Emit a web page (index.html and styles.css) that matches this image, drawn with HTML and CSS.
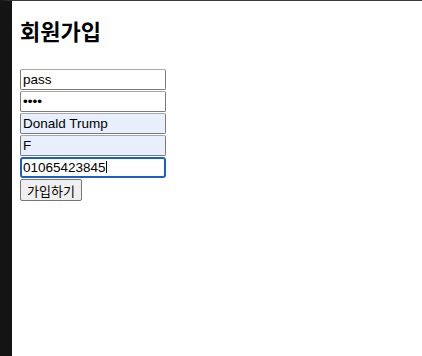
FILE: index.html
```html
<!DOCTYPE html>
<html lang="ko">
<head>
    <meta charset="UTF-8">
    <meta name="viewport" content="width=device-width, initial-scale=1.0">
    <title>회원가입</title>
    <link rel="stylesheet" href="styles.css">
</head>
<body>
    <div class="page">
        <h1 class="title">회원가입</h1>
        <form class="join-form">
            <input class="field" type="text" name="id" value="pass">
            <input class="field" type="password" name="pw" value="1234">
            <input class="field autofill" type="text" name="name" value="Donald Trump">
            <input class="field autofill" type="text" name="gender" value="F">
            <div class="field-wrap">
                <input class="field focused" type="text" name="phone" value="01065423845">
                <span class="caret"></span>
            </div>
            <button class="submit" type="button">가입하기</button>
        </form>
    </div>
</body>
</html>
```

FILE: styles.css
```css
/* 기본 페이지 */
html, body {
    margin: 0;
    padding: 0;
    background-color: #ffffff;
}

.page {
    min-height: 355px;
    border-top: 1px solid #3a3a3a;
    border-left: 12px solid #141414;
    padding: 14px 8px 0 8px;
    font-family: Arial, "Liberation Sans", "Noto Sans CJK KR", sans-serif;
    color: #000;
}

.title {
    margin: 0 0 24px 0;
    font-family: "Noto Sans CJK KR", sans-serif;
    font-size: 22px;
    line-height: 30px;
    font-weight: 700;
}

.join-form {
    display: flex;
    flex-direction: column;
    align-items: flex-start;
    gap: 1px;
}

.field {
    box-sizing: border-box;
    width: 146px;
    height: 21px;
    margin: 0;
    padding: 1px 2px;
    border: 1px solid #7a7a7a;
    border-top-color: #a8a8a8;
    border-radius: 2px;
    background-color: #fff;
    font-family: Arial, "Liberation Sans", sans-serif;
    font-size: 13.5px;
    color: #000;
    outline: none;
}

.autofill {
    background-color: #e8f0fe;
}

/* 포커스된 입력칸 */
.field-wrap {
    position: relative;
}

.focused {
    border: 2px solid #1a5fc6;
    padding: 0 1px;
    border-radius: 3px;
}

.caret {
    position: absolute;
    left: 86px;
    top: 4px;
    width: 1px;
    height: 12px;
    background-color: #000;
}

.submit {
    box-sizing: border-box;
    height: 22px;
    margin: 0;
    padding: 1px 6px;
    border: 1px solid #767676;
    border-radius: 2px;
    background-color: #efefef;
    font-family: "Noto Sans CJK KR", sans-serif;
    font-size: 13px;
    color: #000;
}
```
